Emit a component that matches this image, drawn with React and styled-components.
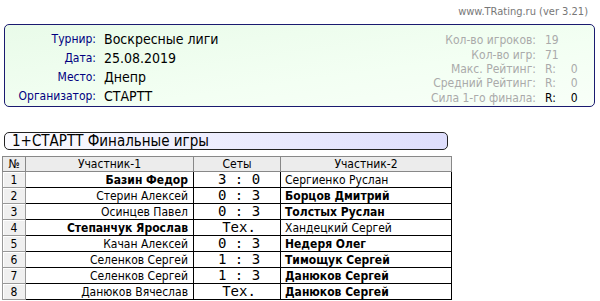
import React from "react";
import styled, { createGlobalStyle } from "styled-components";

const Global = createGlobalStyle`
  html, body { margin: 0; padding: 0; background: #fff; }
  body { font-family: "DejaVu Sans Condensed", "DejaVu Sans", sans-serif; color: #000; }
`;

const Page = styled.div`
  width: 600px;
  height: 301px;
  overflow: hidden;
`;

const TopBar = styled.div`
  height: 24px;
  line-height: 24px;
  text-align: right;
  padding-right: 12px;
  font-size: 11px;
  color: #777;
`;

const InfoBox = styled.div`
  margin-left: 4px;
  width: 589px;
  height: 81px;
  border: 1px solid #1a1a70;
  border-radius: 5px;
  background: linear-gradient(to bottom right, #e9fbe9, #f3fff3 60%, #f8fff8);
  display: flex;
  justify-content: space-between;
`;

const LeftGrid = styled.div`
  display: grid;
  grid-template-columns: 91px auto;
  column-gap: 8px;
  grid-auto-rows: 19px;
  align-items: center;
  padding-top: 4px;
`;

const Label = styled.div`
  text-align: right;
  font-size: 12px;
  color: #000080;
`;

const Value = styled.div`
  font-size: 14px;
  color: #000;
`;

const RightGrid = styled.div`
  display: grid;
  grid-template-columns: auto 40px;
  column-gap: 9px;
  grid-auto-rows: 14.4px;
  align-items: center;
  padding-top: 8px;
  padding-right: 9px;
`;

const StatLabel = styled.div`
  text-align: right;
  font-size: 12px;
  color: #aaa;
`;

const StatValue = styled.div`
  font-size: 12px;
  color: ${(p) => (p.$dark ? "#000" : "#aaa")};
  display: flex;
  gap: 15px;
`;

const TitleBox = styled.div`
  margin: 25px 0 0 4px;
  width: 435px;
  height: 16px;
  line-height: 16px;
  padding-left: 7px;
  border: 1px solid #222;
  border-radius: 5px;
  background: linear-gradient(to right, #fbfbff, #dedefc);
  font-size: 15px;
`;

const Table = styled.table`
  margin: 6px 0 0 2px;
  width: 450px;
  border-collapse: collapse;
  table-layout: fixed;
  font-size: 12px;
  border-right: 1px solid #000;
`;

const HeadCell = styled.th`
  height: 14px;
  padding: 0;
  font-weight: normal;
  font-size: 12px;
  background: #ececec;
  border: 1px solid #888;
  text-align: center;
`;

const NumCell = styled.td`
  height: 15px;
  padding: 0;
  text-align: center;
  background: #f0f0f0;
  border: 1px solid #999;
  box-shadow: inset 1px 1px 0 #fff;
`;

const NameCell = styled.td`
  padding: 0 ${(p) => (p.$right ? "5px" : "0")} 0 ${(p) => (p.$right ? "0" : "4px")};
  text-align: ${(p) => (p.$right ? "right" : "left")};
  font-weight: ${(p) => (p.$bold ? "bold" : "normal")};
  border-bottom: 1px solid #000;
  border-left: 1px solid #000;
  white-space: nowrap;
  overflow: hidden;
`;

const ScoreCell = styled.td`
  padding: 0 0 0 4px;
  text-align: center;
  font-family: "DejaVu Sans Mono", monospace;
  font-size: 14px;
  line-height: 15px;
  border-bottom: 1px solid #000;
  border-left: 1px solid #000;
  white-space: pre;
`;

const info = [
  ["Турнир:", "Воскресные лиги"],
  ["Дата:", "25.08.2019"],
  ["Место:", "Днепр"],
  ["Организатор:", "СТАРТТ"],
];

const stats = [
  ["Кол-во игроков:", ["19"]],
  ["Кол-во игр:", ["71"]],
  ["Макс. Рейтинг:", ["R:", "0"]],
  ["Средний Рейтинг:", ["R:", "0"]],
  ["Сила 1-го финала:", ["R:", "0"], true],
];

const games = [
  ["Базин Федор", true, "3 : 0", "Сергиенко Руслан", false],
  ["Стерин Алексей", false, "0 : 3", "Борцов Дмитрий", true],
  ["Осинцев Павел", false, "0 : 3", "Толстых Руслан", true],
  ["Степанчук Ярослав", true, "Тех.", "Хандецкий Сергей", false],
  ["Качан Алексей", false, "0 : 3", "Недеря Олег", true],
  ["Селенков Сергей", false, "1 : 3", "Тимощук Сергей", true],
  ["Селенков Сергей", false, "1 : 3", "Данюков Сергей", true],
  ["Данюков Вячеслав", false, "Тех.", "Данюков Сергей", true],
];

export default function App() {
  return (
    <Page>
      <Global />
      <TopBar>www.TRating.ru (ver 3.21)</TopBar>
      <InfoBox>
        <LeftGrid>
          {info.map(([l, v]) => (
            <React.Fragment key={l}>
              <Label>{l}</Label>
              <Value>{v}</Value>
            </React.Fragment>
          ))}
        </LeftGrid>
        <RightGrid>
          {stats.map(([l, v, dark]) => (
            <React.Fragment key={l}>
              <StatLabel>{l}</StatLabel>
              <StatValue $dark={dark}>
                {v.map((x, i) => (
                  <span key={i}>{x}</span>
                ))}
              </StatValue>
            </React.Fragment>
          ))}
        </RightGrid>
      </InfoBox>
      <TitleBox>1+СТАРТТ Финальные игры</TitleBox>
      <Table>
        <colgroup>
          <col style={{ width: 23 }} />
          <col style={{ width: 168 }} />
          <col style={{ width: 87 }} />
          <col />
        </colgroup>
        <thead>
          <tr>
            <HeadCell>№</HeadCell>
            <HeadCell>Участник-1</HeadCell>
            <HeadCell>Сеты</HeadCell>
            <HeadCell>Участник-2</HeadCell>
          </tr>
        </thead>
        <tbody>
          {games.map(([a, ab, s, b, bb], i) => (
            <tr key={i}>
              <NumCell>{i + 1}</NumCell>
              <NameCell $right $bold={ab}>{a}</NameCell>
              <ScoreCell>{s}</ScoreCell>
              <NameCell $bold={bb}>{b}</NameCell>
            </tr>
          ))}
        </tbody>
      </Table>
    </Page>
  );
}
